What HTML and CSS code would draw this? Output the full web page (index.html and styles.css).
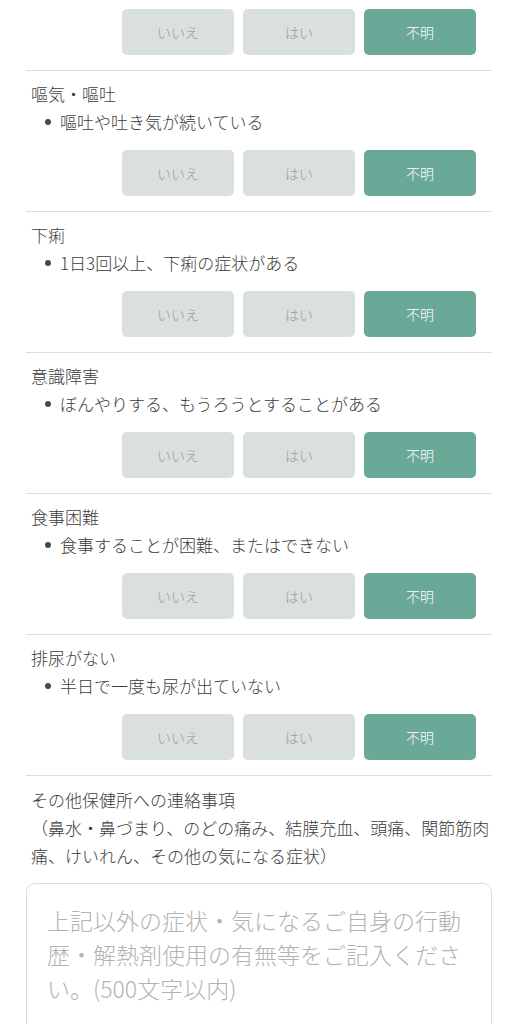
FILE: index.html
```html
<!DOCTYPE html>
<html lang="ja">
<head>
    <meta charset="UTF-8">
    <meta name="viewport" content="width=device-width, initial-scale=1.0">
    <title>健康観察</title>
    <link rel="stylesheet" href="styles.css">
</head>
<body>
    <div class="form">
        <div class="item item-tail">
            <div class="choices">
                <button class="choice">いいえ</button>
                <button class="choice">はい</button>
                <button class="choice selected">不明</button>
            </div>
        </div>

        <div class="item">
            <div class="item-title">嘔気・嘔吐</div>
            <ul class="item-notes">
                <li>嘔吐や吐き気が続いている</li>
            </ul>
            <div class="choices">
                <button class="choice">いいえ</button>
                <button class="choice">はい</button>
                <button class="choice selected">不明</button>
            </div>
        </div>

        <div class="item">
            <div class="item-title">下痢</div>
            <ul class="item-notes">
                <li>1日3回以上、下痢の症状がある</li>
            </ul>
            <div class="choices">
                <button class="choice">いいえ</button>
                <button class="choice">はい</button>
                <button class="choice selected">不明</button>
            </div>
        </div>

        <div class="item">
            <div class="item-title">意識障害</div>
            <ul class="item-notes">
                <li>ぼんやりする、もうろうとすることがある</li>
            </ul>
            <div class="choices">
                <button class="choice">いいえ</button>
                <button class="choice">はい</button>
                <button class="choice selected">不明</button>
            </div>
        </div>

        <div class="item">
            <div class="item-title">食事困難</div>
            <ul class="item-notes">
                <li>食事することが困難、またはできない</li>
            </ul>
            <div class="choices">
                <button class="choice">いいえ</button>
                <button class="choice">はい</button>
                <button class="choice selected">不明</button>
            </div>
        </div>

        <div class="item">
            <div class="item-title">排尿がない</div>
            <ul class="item-notes">
                <li>半日で一度も尿が出ていない</li>
            </ul>
            <div class="choices">
                <button class="choice">いいえ</button>
                <button class="choice">はい</button>
                <button class="choice selected">不明</button>
            </div>
        </div>

        <div class="memo">
            <div class="memo-title">その他保健所への連絡事項<br>（鼻水・鼻づまり、のどの痛み、結膜充血、頭痛、関節筋肉痛、けいれん、その他の気になる症状）</div>
            <textarea class="memo-input" placeholder="上記以外の症状・気になるご自身の行動歴・解熱剤使用の有無等をご記入ください。(500文字以内)"></textarea>
        </div>
    </div>
</body>
</html>
```

FILE: styles.css
```css
body {
    margin: 0;
    padding: 0;
    background: #fff;
    color: #3c3c3c;
    font-family: "Noto Sans CJK JP", "Noto Sans", sans-serif;
    font-size: 17px;
    font-weight: 300;
    line-height: 28px;
}

.form {
    padding: 0 26px;
}

.item {
    padding: 9px 0 15px;
    border-bottom: 1px solid #dcdcdc;
}

.item-tail {
    padding-top: 9px;
}

.item-title {
    padding-left: 5px;
}

.item-notes {
    list-style: none;
    margin: 0;
    padding: 0 0 0 19px;
}

.item-notes li {
    display: flex;
    align-items: center;
}

.item-notes li::before {
    content: "";
    width: 6px;
    height: 6px;
    border-radius: 50%;
    background: #4a4a4a;
    margin-right: 9px;
    flex-shrink: 0;
}

.choices {
    display: flex;
    justify-content: flex-end;
    gap: 9px;
    padding-right: 16px;
}

.item-notes + .choices {
    margin-top: 14px;
}

.choice {
    width: 112px;
    height: 46px;
    border: none;
    border-radius: 5px;
    background: #d9e0df;
    color: #9a9a9a;
    font-family: inherit;
    font-size: 14px;
    font-weight: 300;
    cursor: pointer;
}

.choice.selected {
    background: #6aa898;
    color: #fff;
}

.memo {
    padding-top: 10px;
}

.memo-title {
    padding-left: 5px;
    margin-bottom: 13px;
}

.memo-input {
    display: block;
    box-sizing: border-box;
    width: 100%;
    height: 170px;
    padding: 19px 20px;
    border: 1px solid #dcdcdc;
    border-radius: 9px;
    font-family: inherit;
    font-size: 23px;
    font-weight: 300;
    line-height: 34px;
    color: #3c3c3c;
    resize: none;
}

.memo-input::placeholder {
    color: #b3b3b3;
}
```
